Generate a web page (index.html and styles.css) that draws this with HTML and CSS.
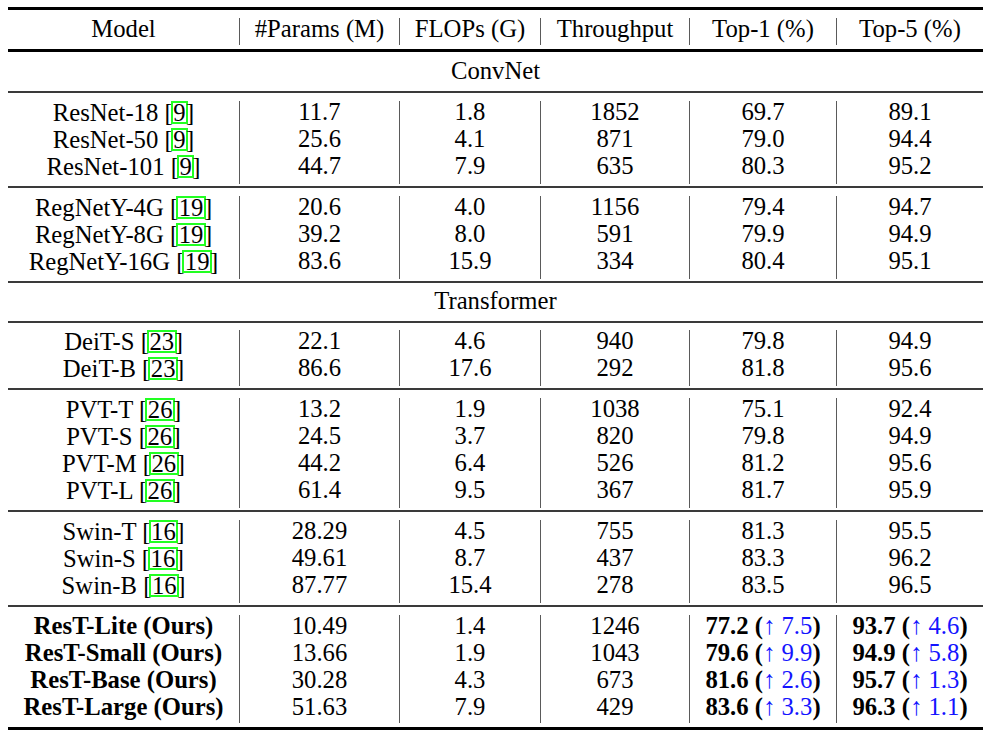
FILE: index.html
```html
<!DOCTYPE html>
<html>
<head>
<meta charset="utf-8">
<link rel="stylesheet" href="styles.css">
</head>
<body>
<div class="tbl">
  <div class="rule heavy"></div>
  <div class="group">
    <div class="row">
      <div class="c">Model</div><div class="c v">#Params (M)</div><div class="c v">FLOPs (G)</div><div class="c v">Throughput</div><div class="c v">Top-1 (%)</div><div class="c v">Top-5 (%)</div>
    </div>
  </div>
  <div class="rule heavy"></div>
  <div class="group"><div class="section">ConvNet</div></div>
  <div class="rule"></div>
  <div class="group">
    <div class="row"><div class="c">ResNet-18 [<span class="cite">9</span>]</div><div class="c v">11.7</div><div class="c v">1.8</div><div class="c v">1852</div><div class="c v">69.7</div><div class="c v">89.1</div></div>
    <div class="row"><div class="c">ResNet-50 [<span class="cite">9</span>]</div><div class="c v">25.6</div><div class="c v">4.1</div><div class="c v">871</div><div class="c v">79.0</div><div class="c v">94.4</div></div>
    <div class="row"><div class="c">ResNet-101 [<span class="cite">9</span>]</div><div class="c v">44.7</div><div class="c v">7.9</div><div class="c v">635</div><div class="c v">80.3</div><div class="c v">95.2</div></div>
  </div>
  <div class="rule"></div>
  <div class="group">
    <div class="row"><div class="c">RegNetY-4G [<span class="cite">19</span>]</div><div class="c v">20.6</div><div class="c v">4.0</div><div class="c v">1156</div><div class="c v">79.4</div><div class="c v">94.7</div></div>
    <div class="row"><div class="c">RegNetY-8G [<span class="cite">19</span>]</div><div class="c v">39.2</div><div class="c v">8.0</div><div class="c v">591</div><div class="c v">79.9</div><div class="c v">94.9</div></div>
    <div class="row"><div class="c">RegNetY-16G [<span class="cite">19</span>]</div><div class="c v">83.6</div><div class="c v">15.9</div><div class="c v">334</div><div class="c v">80.4</div><div class="c v">95.1</div></div>
  </div>
  <div class="rule"></div>
  <div class="group tight"><div class="section">Transformer</div></div>
  <div class="rule"></div>
  <div class="group tight">
    <div class="row"><div class="c">DeiT-S [<span class="cite">23</span>]</div><div class="c v">22.1</div><div class="c v">4.6</div><div class="c v">940</div><div class="c v">79.8</div><div class="c v">94.9</div></div>
    <div class="row"><div class="c">DeiT-B [<span class="cite">23</span>]</div><div class="c v">86.6</div><div class="c v">17.6</div><div class="c v">292</div><div class="c v">81.8</div><div class="c v">95.6</div></div>
  </div>
  <div class="rule"></div>
  <div class="group">
    <div class="row"><div class="c">PVT-T [<span class="cite">26</span>]</div><div class="c v">13.2</div><div class="c v">1.9</div><div class="c v">1038</div><div class="c v">75.1</div><div class="c v">92.4</div></div>
    <div class="row"><div class="c">PVT-S [<span class="cite">26</span>]</div><div class="c v">24.5</div><div class="c v">3.7</div><div class="c v">820</div><div class="c v">79.8</div><div class="c v">94.9</div></div>
    <div class="row"><div class="c">PVT-M [<span class="cite">26</span>]</div><div class="c v">44.2</div><div class="c v">6.4</div><div class="c v">526</div><div class="c v">81.2</div><div class="c v">95.6</div></div>
    <div class="row"><div class="c">PVT-L [<span class="cite">26</span>]</div><div class="c v">61.4</div><div class="c v">9.5</div><div class="c v">367</div><div class="c v">81.7</div><div class="c v">95.9</div></div>
  </div>
  <div class="rule"></div>
  <div class="group">
    <div class="row"><div class="c">Swin-T [<span class="cite">16</span>]</div><div class="c v">28.29</div><div class="c v">4.5</div><div class="c v">755</div><div class="c v">81.3</div><div class="c v">95.5</div></div>
    <div class="row"><div class="c">Swin-S [<span class="cite">16</span>]</div><div class="c v">49.61</div><div class="c v">8.7</div><div class="c v">437</div><div class="c v">83.3</div><div class="c v">96.2</div></div>
    <div class="row"><div class="c">Swin-B [<span class="cite">16</span>]</div><div class="c v">87.77</div><div class="c v">15.4</div><div class="c v">278</div><div class="c v">83.5</div><div class="c v">96.5</div></div>
  </div>
  <div class="rule"></div>
  <div class="group">
    <div class="row"><div class="c b">ResT-Lite (Ours)</div><div class="c v">10.49</div><div class="c v">1.4</div><div class="c v">1246</div><div class="c v"><b>77.2 (</b><span class="gain">↑ 7.5</span><b>)</b></div><div class="c v"><b>93.7 (</b><span class="gain">↑ 4.6</span><b>)</b></div></div>
    <div class="row"><div class="c b">ResT-Small (Ours)</div><div class="c v">13.66</div><div class="c v">1.9</div><div class="c v">1043</div><div class="c v"><b>79.6 (</b><span class="gain">↑ 9.9</span><b>)</b></div><div class="c v"><b>94.9 (</b><span class="gain">↑ 5.8</span><b>)</b></div></div>
    <div class="row"><div class="c b">ResT-Base (Ours)</div><div class="c v">30.28</div><div class="c v">4.3</div><div class="c v">673</div><div class="c v"><b>81.6 (</b><span class="gain">↑ 2.6</span><b>)</b></div><div class="c v"><b>95.7 (</b><span class="gain">↑ 1.3</span><b>)</b></div></div>
    <div class="row"><div class="c b">ResT-Large (Ours)</div><div class="c v">51.63</div><div class="c v">7.9</div><div class="c v">429</div><div class="c v"><b>83.6 (</b><span class="gain">↑ 3.3</span><b>)</b></div><div class="c v"><b>96.3 (</b><span class="gain">↑ 1.1</span><b>)</b></div></div>
  </div>
  <div class="rule heavy"></div>
</div>
</body>
</html>
```

FILE: styles.css
```css
html, body {
  margin: 0;
  padding: 0;
  background: #ffffff;
}

body {
  font-family: "Liberation Serif", "Times New Roman", serif;
  font-size: 24.7px;
  color: #000;
}

.tbl {
  width: 975px;
  margin-left: 8px;
  padding-top: 7px;
}

.rule {
  height: 2px;
  background: #3a3a3a;
}

.rule.heavy {
  height: 3px;
  background: #000;
}

.group {
  padding: 8px 0 4px;
}

.group.tight {
  padding-top: 7px;
}

.row {
  display: grid;
  grid-template-columns: 231px 160px 141px 149px 147px 147px;
  height: 27px;
}

.c {
  text-align: center;
  line-height: 21px;
  padding-bottom: 6px;
  white-space: nowrap;
}

.c.v {
  border-left: 1px solid #5a5a5a;
}

.c.b, .c b {
  font-weight: bold;
}

.section {
  height: 27px;
  line-height: 21px;
  padding-bottom: 6px;
  box-sizing: border-box;
  text-align: center;
}

.cite {
  display: inline-block;
  line-height: 19px;
  border: 2px solid #22ff22;
  padding: 0 0.5px;
  margin: 0 -2px;
}

.gain {
  color: #1414ff;
}
```
